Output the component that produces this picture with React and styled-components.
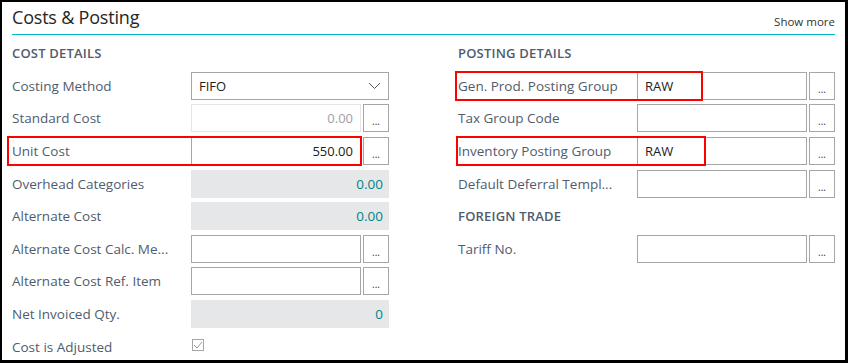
import React from 'react';
import styled, { createGlobalStyle } from 'styled-components';

const GlobalStyle = createGlobalStyle`
  body {
    margin: 0;
    background: #fff;
    font-family: "Open Sans", "Noto Sans", sans-serif;
  }
`;

const Frame = styled.div`
  width: 848px;
  height: 363px;
  box-sizing: border-box;
  border: solid #000;
  border-width: 2px 3px 3px 2px;
  background: #fff;
  overflow: hidden;
  padding: 0 10px 0 10px;
`;

const Header = styled.div`
  height: 32px;
  display: flex;
  align-items: center;
  justify-content: space-between;
  border-bottom: 1px solid #00b7c3;
`;

const Title = styled.h2`
  margin: 0;
  font-size: 18px;
  font-weight: 400;
  color: #262626;
  letter-spacing: -0.2px;
  padding-bottom: 3px;
`;

const ShowMore = styled.span`
  font-size: 11.5px;
  color: #333;
  padding-top: 6px;
`;

const Body = styled.div`
  display: grid;
  grid-template-columns: 377px 377px;
  column-gap: 69px;
  padding-top: 2px;
`;

const Column = styled.div`
  display: flex;
  flex-direction: column;
`;

const GroupTitle = styled.div`
  height: 32.6px;
  display: flex;
  align-items: center;
  font-size: 13px;
  font-weight: 600;
  color: #505c6d;
  letter-spacing: 0.2px;
  text-transform: uppercase;
`;

const Row = styled.div`
  position: relative;
  height: 32.6px;
  display: grid;
  grid-template-columns: 179px 1fr;
  align-items: center;
`;

const Label = styled.span`
  font-size: 13.5px;
  color: #505c6d;
  white-space: nowrap;
`;

const Field = styled.div`
  display: flex;
  gap: 2px;
  height: 28px;
`;

const Input = styled.div`
  flex: 1;
  box-sizing: border-box;
  height: 28px;
  display: flex;
  align-items: center;
  justify-content: ${p => (p.$right ? 'flex-end' : 'space-between')};
  padding: 0 7px;
  font-size: 13px;
  color: ${p => (p.$disabled ? '#a0a0a0' : '#212121')};
  background: #fff;
  border: 1px solid ${p => (p.$disabled ? '#e6e6e6' : '#a6a6a6')};
`;

const ReadOnly = styled.div`
  flex: 1;
  height: 28px;
  display: flex;
  align-items: center;
  justify-content: flex-end;
  padding: 0 6px;
  font-size: 13.5px;
  color: #00848a;
  background: #e6e7e8;
`;

const Lookup = styled.button`
  width: 26px;
  height: 28px;
  box-sizing: border-box;
  padding: 0 0 5px;
  border: 1px solid #a6a6a6;
  background: #fff;
  font-family: inherit;
  font-size: 10px;
  color: #333;
  display: flex;
  align-items: flex-end;
  justify-content: center;
  line-height: 1;
`;

const Check = styled.span`
  width: 12px;
  height: 12px;
  margin: -4px 0 0 1px;
  box-sizing: border-box;
  border: 1px solid #a6a6a6;
  display: flex;
  align-items: center;
  justify-content: center;
`;

const Highlight = styled.span`
  position: absolute;
  left: ${p => p.$left}px;
  width: ${p => p.$width}px;
  top: calc(50% - 15px);
  height: 30px;
  box-sizing: border-box;
  border: 2px solid #f00;
  pointer-events: none;
`;

const Chevron = () => (
  <svg width="13" height="8" viewBox="0 0 13 8">
    <path d="M1 1l5.5 5.5L12 1" fill="none" stroke="#555" strokeWidth="1" />
  </svg>
);

const TextRow = ({ label, value, right, disabled, highlight }) => (
  <Row>
    {highlight && <Highlight $left={highlight[0]} $width={highlight[1]} />}
    <Label>{label}</Label>
    <Field>
      <Input $right={right} $disabled={disabled}>{value}</Input>
      <Lookup>...</Lookup>
    </Field>
  </Row>
);

const ValueRow = ({ label, value }) => (
  <Row>
    <Label>{label}</Label>
    <Field>
      <ReadOnly>{value}</ReadOnly>
    </Field>
  </Row>
);

export default function App() {
  return (
    <>
      <GlobalStyle />
      <Frame>
        <Header>
          <Title>Costs &amp; Posting</Title>
          <ShowMore>Show more</ShowMore>
        </Header>
        <Body>
          <Column>
            <GroupTitle>Cost Details</GroupTitle>
            <Row>
              <Label>Costing Method</Label>
              <Field>
                <Input>
                  FIFO
                  <Chevron />
                </Input>
              </Field>
            </Row>
            <TextRow label="Standard Cost" value="0.00" right disabled />
            <TextRow label="Unit Cost" value="550.00" right highlight={[-5, 355]} />
            <ValueRow label="Overhead Categories" value="0.00" />
            <ValueRow label="Alternate Cost" value="0.00" />
            <TextRow label="Alternate Cost Calc. Me..." value="" />
            <TextRow label="Alternate Cost Ref. Item" value="" />
            <ValueRow label="Net Invoiced Qty." value="0" />
            <Row>
              <Label>Cost is Adjusted</Label>
              <Check>
                <svg width="10" height="8" viewBox="0 0 10 8">
                  <path d="M1 4l3 3 5-6" fill="none" stroke="#9a9a9a" strokeWidth="1" />
                </svg>
              </Check>
            </Row>
          </Column>
          <Column>
            <GroupTitle>Posting Details</GroupTitle>
            <TextRow label="Gen. Prod. Posting Group" value="RAW" highlight={[-3, 248]} />
            <TextRow label="Tax Group Code" value="" />
            <TextRow label="Inventory Posting Group" value="RAW" highlight={[-2, 250]} />
            <TextRow label="Default Deferral Templ..." value="" />
            <GroupTitle>Foreign Trade</GroupTitle>
            <TextRow label="Tariff No." value="" />
          </Column>
        </Body>
      </Frame>
    </>
  );
}
